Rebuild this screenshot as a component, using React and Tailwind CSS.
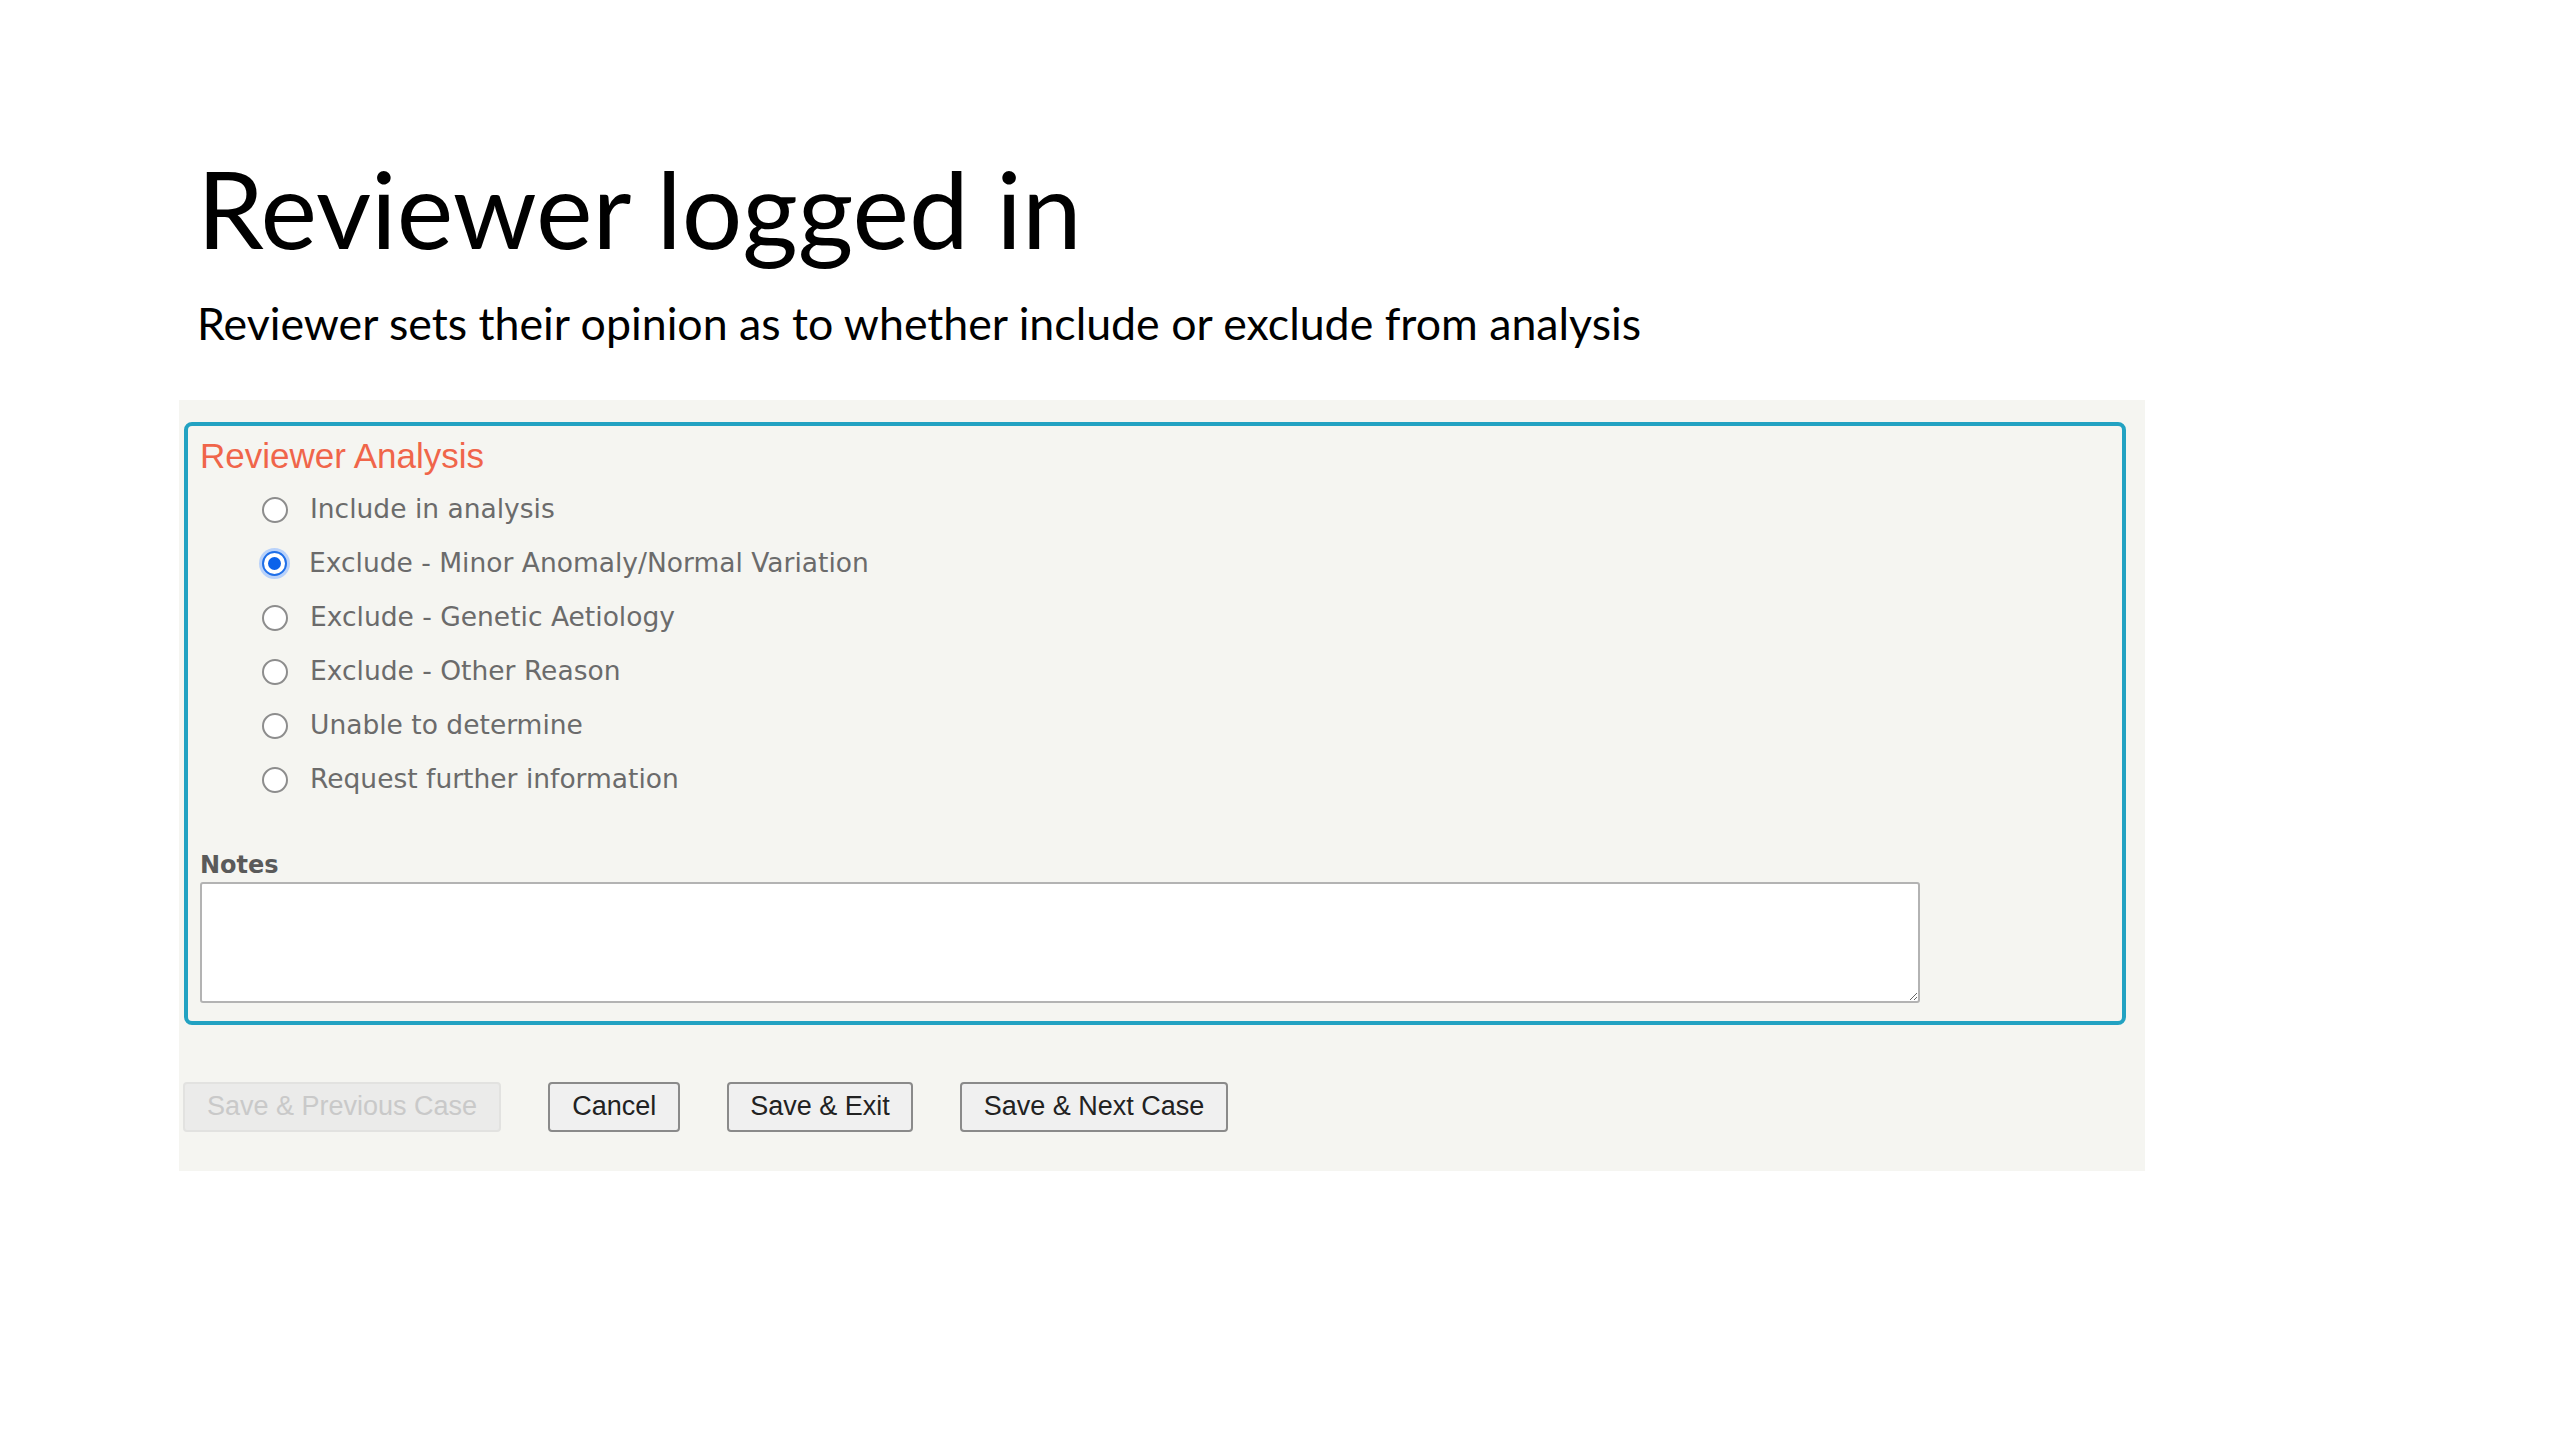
import React, { useState } from 'react';

const options = [
  'Include in analysis',
  'Exclude - Minor Anomaly/Normal Variation',
  'Exclude - Genetic Aetiology',
  'Exclude - Other Reason',
  'Unable to determine',
  'Request further information',
];

const Radio = ({ checked }) => (
  checked ? (
    <span className="flex h-[25px] w-[25px] shrink-0 items-center justify-center rounded-full border-2 border-[#1f6fe8] bg-white shadow-[0_0_0_3px_#b9d2fa]">
      <span className="h-[13px] w-[13px] rounded-full bg-[#0b62ea]" />
    </span>
  ) : (
    <span className="h-[26px] w-[26px] shrink-0 rounded-full border-2 border-[#8d8d8d] bg-white" />
  )
);

const App = () => {
  const [choice, setChoice] = useState(1);
  const [notes, setNotes] = useState('');

  return (
    <div className="min-h-screen w-full bg-white font-['Liberation_Sans',Arial,sans-serif]">
      <div className="pt-[154px]">
        <h1 className="ml-[197px] font-['Lato',sans-serif] text-[107px] leading-none font-normal text-black">
          Reviewer logged in
        </h1>
        <p className="ml-[197px] mt-[40px] font-['Lato',sans-serif] text-[44.7px] leading-none text-black">
          Reviewer sets their opinion as to whether include or exclude from analysis
        </p>

        {/* Form panel */}
        <div className="ml-[179px] mt-[54px] w-[1966px] bg-[#f5f5f1] pt-[22px] pb-[39px]">
          <div className="ml-[5px] mr-[19px] rounded-[8px] border-4 border-[#22a2c2] px-[12px] pt-[12px] pb-[18px]">
            <h2 className="text-[35px] leading-none text-[#f0654a]">Reviewer Analysis</h2>

            <div className="mt-[10px] ml-[62px] flex flex-col">
              {options.map((opt, i) => (
                <label
                  key={opt}
                  onClick={() => setChoice(i)}
                  className="flex h-[54px] cursor-pointer items-center gap-[22px]"
                >
                  <Radio checked={choice === i} />
                  <span className="font-['DejaVu_Sans',sans-serif] text-[26.5px] leading-none text-[#6b6b6b]">{opt}</span>
                </label>
              ))}
            </div>

            <div className="mt-[46px] font-['DejaVu_Sans',sans-serif] text-[24px] leading-none font-bold text-[#5a5a5a]">Notes</div>
            <textarea
              value={notes}
              onChange={(e) => setNotes(e.target.value)}
              className="mt-[5px] block h-[121px] w-[1720px] rounded-[3px] border-2 border-[#b3b3b3] bg-white p-2 text-[24px] outline-none"
            />
          </div>

          {/* Actions */}
          <div className="ml-[4px] mt-[57px] flex items-center gap-[47px]">
            <button
              disabled
              className="h-[50px] rounded-[4px] border-2 border-[#e2e2e0] bg-[#ebebea] px-[22px] text-[27px] text-[#c9c9c9]"
            >
              Save &amp; Previous Case
            </button>
            <button className="h-[50px] rounded-[4px] border-2 border-[#8a8a8a] bg-[#f0f0f0] px-[22px] text-[27px] text-[#222]">
              Cancel
            </button>
            <button className="h-[50px] rounded-[4px] border-2 border-[#8a8a8a] bg-[#f0f0f0] px-[21px] text-[27px] text-[#222]">
              Save &amp; Exit
            </button>
            <button className="h-[50px] rounded-[4px] border-2 border-[#8a8a8a] bg-[#f0f0f0] px-[22px] text-[27px] text-[#222]">
              Save &amp; Next Case
            </button>
          </div>
        </div>
      </div>
    </div>
  );
};

export default App;
